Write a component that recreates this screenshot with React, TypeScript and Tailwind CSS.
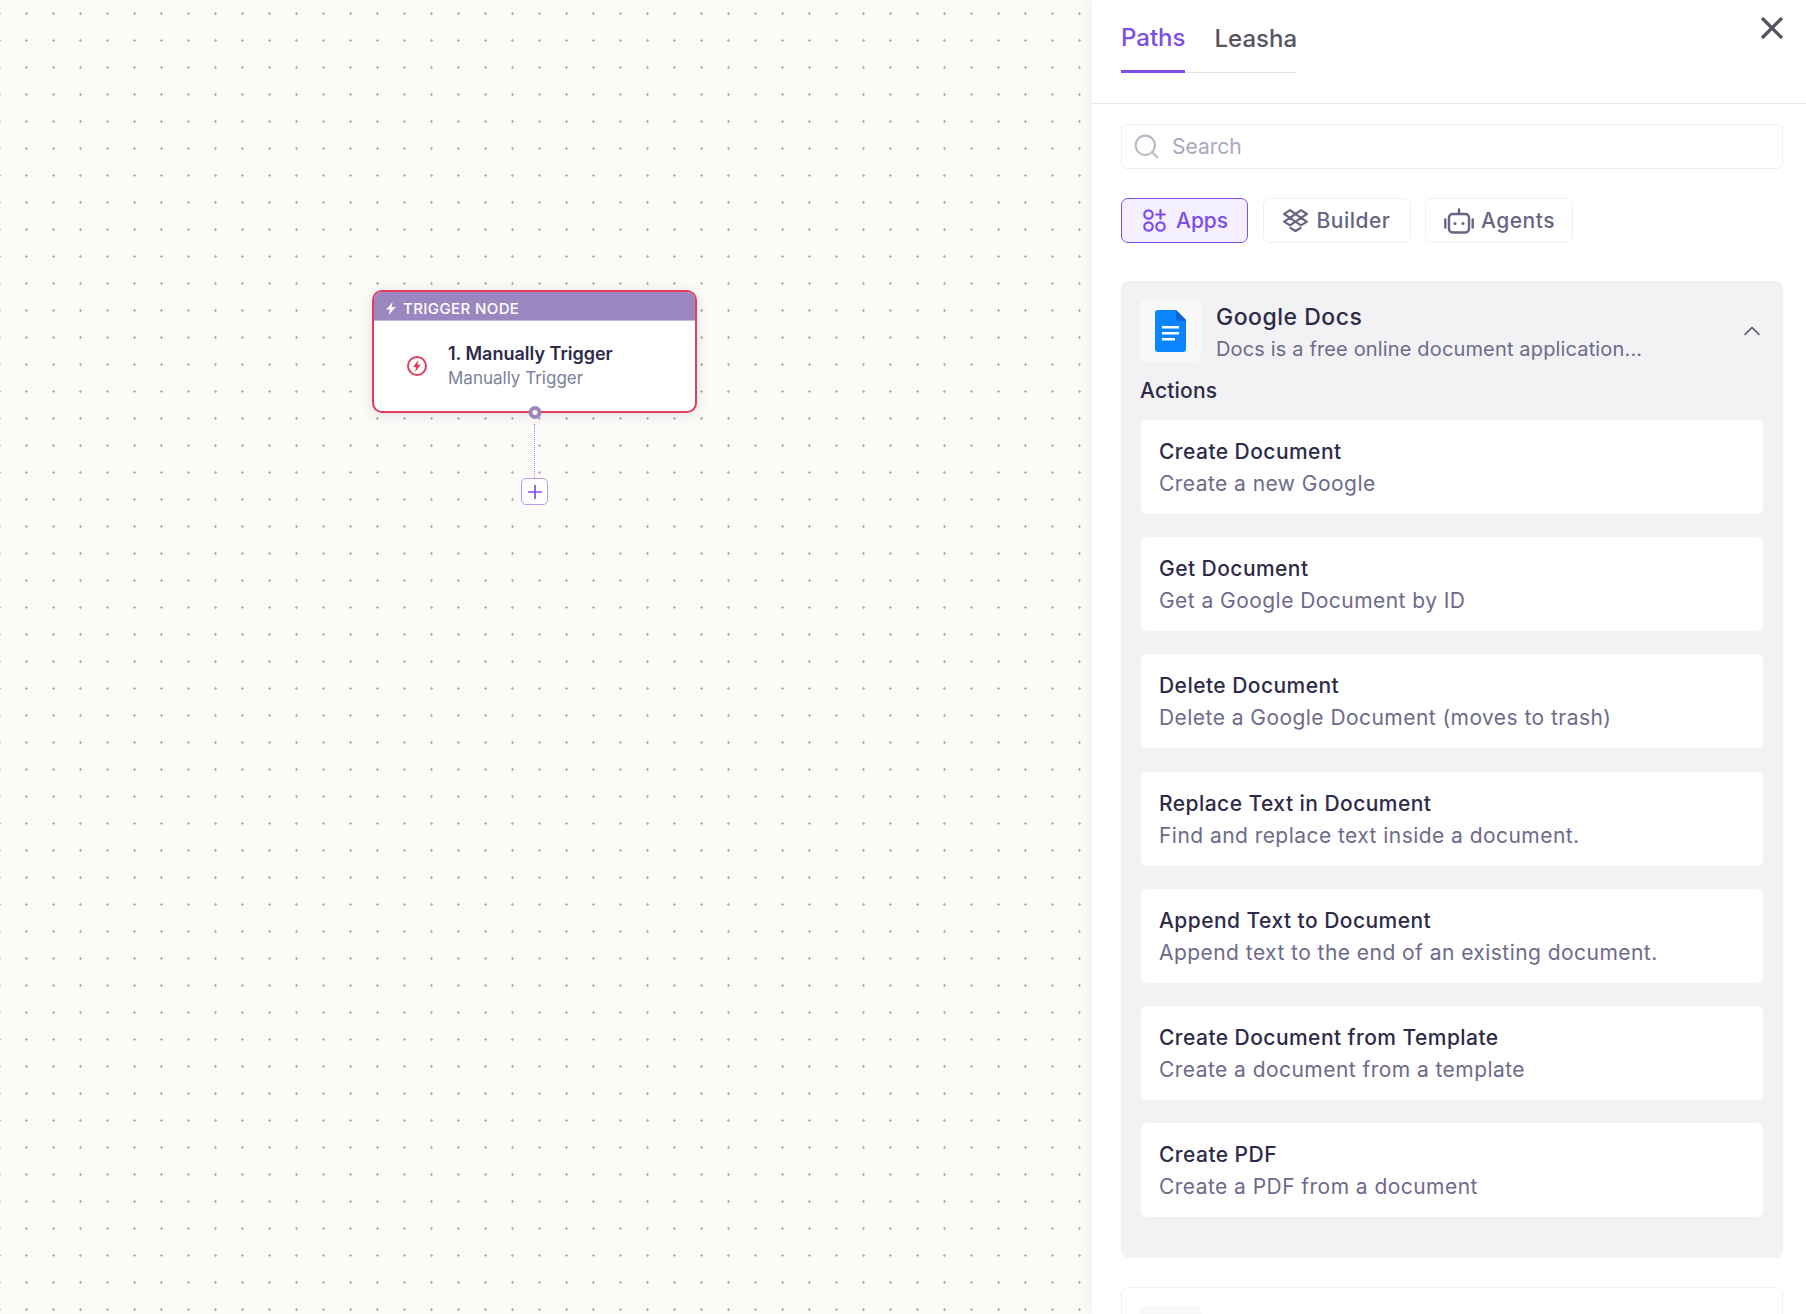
import React from "react";
import { Search, Plus, X, ChevronUp } from "lucide-react";

const actions = [
  ["Create Document", "Create a new Google"],
  ["Get Document", "Get a Google Document by ID"],
  ["Delete Document", "Delete a Google Document (moves to trash)"],
  ["Replace Text in Document", "Find and replace text inside a document."],
  ["Append Text to Document", "Append text to the end of an existing document."],
  ["Create Document from Template", "Create a document from a template"],
  ["Create PDF", "Create a PDF from a document"],
];

function Bolt({ className }: { className?: string }) {
  return (
    <svg viewBox="0 0 12 12" className={className} fill="currentColor" preserveAspectRatio="none">
      <path d="M7.6 0 1.2 7h3.7l-1.2 5 7-7.4H6.6L7.6 0Z" />
    </svg>
  );
}

function AppsIcon() {
  return (
    <svg viewBox="0 0 23 23" className="h-[23px] w-[23px]" fill="none" stroke="currentColor" strokeWidth="2.2" strokeLinecap="round">
      <circle cx="5.5" cy="5.5" r="4.2" />
      <circle cx="5.5" cy="17.5" r="4.2" />
      <circle cx="17.5" cy="17.5" r="4.2" />
      <path d="M17.5 1.2v8.6M13.2 5.5h8.6" />
    </svg>
  );
}

function BuilderIcon() {
  return (
    <svg viewBox="0 0 25 23" className="h-[23px] w-[25px]" fill="none" stroke="currentColor" strokeWidth="2.2" strokeLinejoin="round" strokeLinecap="round">
      <path d="M7 1.2 1.2 5 7 8.8 12.5 5 7 1.2Z" />
      <path d="M18 1.2 12.5 5 18 8.8 23.8 5 18 1.2Z" />
      <path d="M7 8.8 1.2 12.6 7 16.4l5.5-3.8L7 8.8Z" />
      <path d="M18 8.8l-5.5 3.8 5.5 3.8 5.8-3.8L18 8.8Z" />
      <path d="M7.5 19 12.5 22l5-3" />
    </svg>
  );
}

function RobotIcon() {
  return (
    <svg viewBox="0 0 30 26" className="h-[26px] w-[30px]" fill="none" stroke="currentColor" strokeWidth="2.4" strokeLinecap="round">
      <rect x="5" y="6" width="20" height="18.5" rx="3.5" />
      <path d="M15 6V1.5M1.3 11.5v8M28.7 11.5v8" />
      <circle cx="11" cy="15.5" r="1.5" fill="currentColor" stroke="none" />
      <circle cx="19" cy="15.5" r="1.5" fill="currentColor" stroke="none" />
    </svg>
  );
}

function DocsIcon() {
  return (
    <svg viewBox="0 0 31 42" className="h-[42px] w-[31px]">
      <path d="M3 0h18l10 10v29a3 3 0 0 1-3 3H3a3 3 0 0 1-3-3V3a3 3 0 0 1 3-3Z" fill="#0a84ff" />
      <path d="M21 0l10 10v1H23a2 2 0 0 1-2-2V0Z" fill="#0b62d6" />
      <path d="M7 16h17v2.4H7zM7 22h17v2.4H7zM7 28h13v2.4H7z" fill="#ffffff" />
    </svg>
  );
}

export default function App() {
  return (
    <div className="flex h-[1314px] w-[1806px] overflow-hidden bg-white font-['Inter',sans-serif]">
      <div className="relative flex-1 bg-[#fcfbf8] bg-[radial-gradient(circle,#b0b0b0_1px,transparent_1.3px)] bg-[length:27px_27px] bg-[position:13px_0px]">
        <div className="absolute left-[372px] top-[290px] flex w-[325px] flex-col items-center">
          <div className="relative w-full">
            <div className="h-[123px] w-full overflow-hidden rounded-[10px] border-2 border-[#e23d5d] bg-white shadow-[0_2px_14px_rgba(60,50,90,0.12)]">
              <div className="flex h-[29px] items-center gap-[6px] border-b border-[#c9bbdd] bg-[#9c86c0] pl-[11px] pt-[5px] text-[15px] font-medium leading-none tracking-[0.4px] text-white">
                <Bolt className="h-[13px] w-[12px]" />
                TRIGGER NODE
              </div>
              <div className="flex h-[90px] items-center pl-[33px]">
                <div className="flex h-[20px] w-[20px] items-center justify-center rounded-full border-2 border-[#e23d5d] text-[#e23d5d]">
                  <Bolt className="h-[12px] w-[10px]" />
                </div>
                <div className="ml-[21px] flex flex-col">
                  <span className="text-[18px] font-semibold leading-[24px] text-[#2d2a4a]">1. Manually Trigger</span>
                  <span className="text-[17px] leading-[24px] text-[#7a829a]">Manually Trigger</span>
                </div>
              </div>
            </div>
            <div className="absolute left-1/2 top-[116px] h-[13px] w-[13px] -translate-x-1/2 rounded-full border-4 border-[#9c86c0] bg-white" />
          </div>
          <div className="mt-[11px] h-[54px] w-0 border-l border-dotted border-[#9f82ef]" />
          <div className="flex h-[27px] w-[27px] items-center justify-center rounded-[5px] border border-[#b79cf5] bg-white text-[#7c4dea]">
            <Plus size={22} strokeWidth={1.8} />
          </div>
        </div>
      </div>

      <div className="relative w-[714px] shrink-0 bg-white shadow-[-4px_0_12px_rgba(60,50,30,0.05)]">
        <div className="flex h-[104px] items-start border-b border-[#e8e8ec] pl-[29px]">
          <div className="flex h-[73px] gap-[29px] border-b border-[#e4e4e8]">
            <div className="-mb-px flex h-[73px] items-center border-b-[3px] border-[#7c4dea] pt-[5px] text-[24px] font-medium text-[#7c4dea]">Paths</div>
            <div className="flex h-[73px] items-center pt-[5px] text-[24px] font-medium text-[#55535f]">Leasha</div>
          </div>
        </div>
        <X className="absolute left-[662px] top-[10px] text-[#55535f]" size={36} strokeWidth={2.2} />

        <div className="pl-[29px] pr-[23px]">
          <div className="mt-[20px] flex h-[45px] items-center gap-[11px] rounded-[6px] border border-[#eeeef1] pl-[10px] text-[21px] text-[#a9a9bd]">
            <Search size={29} strokeWidth={1.7} className="text-[#b9b9c6]" />
            Search
          </div>

          <div className="mt-[29px] flex gap-[14.5px] text-[21px] font-medium text-[#676484]">
            <div className="flex h-[45px] w-[127px] items-center gap-[10px] rounded-[7px] border border-[#7c4dea] bg-[#f5f0ff] pl-[21px] text-[#7c4dea]">
              <AppsIcon />
              Apps
            </div>
            <div className="flex h-[45px] w-[148px] items-center gap-[9px] rounded-[7px] border border-[#f0f0f3] pl-[19px] tracking-[0.5px]">
              <BuilderIcon />
              Builder
            </div>
            <div className="flex h-[45px] w-[148px] items-center gap-[7px] rounded-[7px] border border-[#f0f0f3] pl-[18px] tracking-[0.5px]">
              <RobotIcon />
              Agents
            </div>
          </div>

          <div className="mt-[38px] h-[977px] rounded-[8px] bg-[#f2f2f4] px-[19px] pt-[19px]">
            <div className="flex h-[62px] items-center">
              <div className="flex h-[62px] w-[61px] shrink-0 items-center justify-center rounded-[6px] bg-[#f8f8f8]">
                <DocsIcon />
              </div>
              <div className="ml-[15px] flex-1 pt-[4px]">
                <div className="text-[23px] font-medium leading-[32px] tracking-[0.5px] text-[#2d2a4a]">Google Docs</div>
                <div className="text-[20px] leading-[32px] tracking-[0.15px] text-[#6e6a8c]">Docs is a free online document application...</div>
              </div>
              <ChevronUp size={28} strokeWidth={1.3} className="mr-[-2px] text-[#55535f]" />
            </div>
            <div className="mt-[14px] text-[21px] font-medium leading-[30px] tracking-[0.2px] text-[#2d2a4a]">Actions</div>
            <div className="mt-[14px] flex flex-col gap-[23.2px] px-[1px]">
              {actions.map(([title, desc]) => (
                <div key={title} className="h-[94px] rounded-[6px] bg-white pl-[18px] pt-[16px] text-[21px] tracking-[0.45px]">
                  <div className="font-medium leading-[32px] text-[#2d2a4a]">{title}</div>
                  <div className="leading-[32px] text-[#6e6a8c]">{desc}</div>
                </div>
              ))}
            </div>
          </div>

          <div className="mt-[29px] flex h-[100px] rounded-[8px] border border-[#f0f0f3] px-[18px] pt-[18px]">
            <div className="h-[62px] w-[61px] rounded-[6px] bg-[#f8f8f8]" />
            <div className="ml-[15px] pt-[4px] text-[23px] font-medium leading-[32px] tracking-[0.5px] text-[#2d2a4a]">Google Sheets</div>
          </div>
        </div>
      </div>
    </div>
  );
}
